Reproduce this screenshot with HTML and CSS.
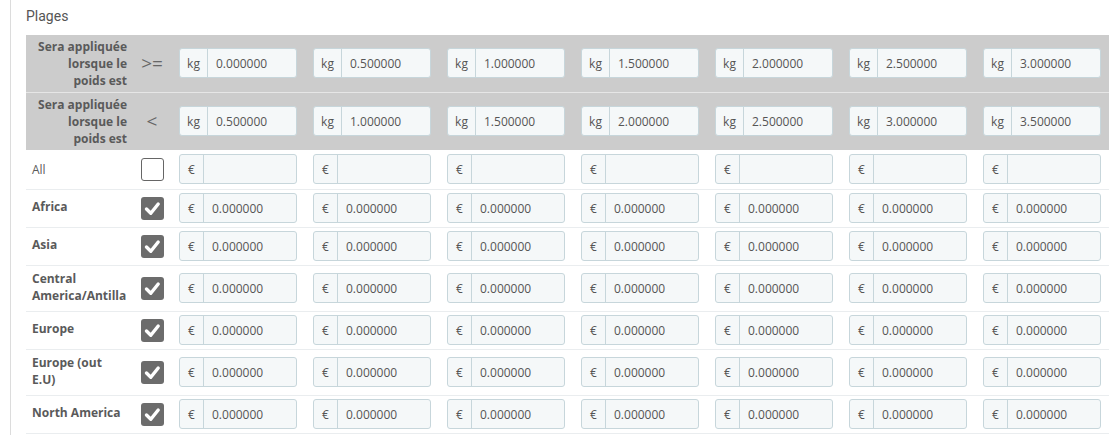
FILE: index.html
```html
<!DOCTYPE html>
<html lang="fr">
  <head>
    <meta charset="UTF-8" />
    <title>Plages</title>
    <link rel="stylesheet" href="styles.css">
  </head>
  <body>
    <div class="panel">
      <h3 class="panel-title">Plages</h3>

      <table class="ranges">
        <colgroup>
          <col class="col-label">
          <col class="col-op">
          <col class="col-val"><col class="col-val"><col class="col-val"><col class="col-val">
          <col class="col-val"><col class="col-val"><col class="col-val">
        </colgroup>
        <tbody id="ranges-body">
          <!-- bornes inférieures -->
          <tr class="range-row">
            <td class="range-label">Sera appliquée<br>lorsque le<br>poids est</td>
            <td class="range-op">&gt;=</td>
            <td><div class="input-group"><span class="addon kg">kg</span><input type="text" value="0.000000"></div></td>
            <td><div class="input-group"><span class="addon kg">kg</span><input type="text" value="0.500000"></div></td>
            <td><div class="input-group"><span class="addon kg">kg</span><input type="text" value="1.000000"></div></td>
            <td><div class="input-group"><span class="addon kg">kg</span><input type="text" value="1.500000"></div></td>
            <td><div class="input-group"><span class="addon kg">kg</span><input type="text" value="2.000000"></div></td>
            <td><div class="input-group"><span class="addon kg">kg</span><input type="text" value="2.500000"></div></td>
            <td><div class="input-group"><span class="addon kg">kg</span><input type="text" value="3.000000"></div></td>
          </tr>

          <!-- bornes supérieures -->
          <tr class="range-row second">
            <td class="range-label">Sera appliquée<br>lorsque le<br>poids est</td>
            <td class="range-op">&lt;</td>
            <td><div class="input-group"><span class="addon kg">kg</span><input type="text" value="0.500000"></div></td>
            <td><div class="input-group"><span class="addon kg">kg</span><input type="text" value="1.000000"></div></td>
            <td><div class="input-group"><span class="addon kg">kg</span><input type="text" value="1.500000"></div></td>
            <td><div class="input-group"><span class="addon kg">kg</span><input type="text" value="2.000000"></div></td>
            <td><div class="input-group"><span class="addon kg">kg</span><input type="text" value="2.500000"></div></td>
            <td><div class="input-group"><span class="addon kg">kg</span><input type="text" value="3.000000"></div></td>
            <td><div class="input-group"><span class="addon kg">kg</span><input type="text" value="3.500000"></div></td>
          </tr>

          <!-- tous les pays -->
          <tr class="zone-row all-row">
            <td class="zone-label all">All</td>
            <td class="zone-check"><span class="check"></span></td>
            <td><div class="input-group"><span class="addon">€</span><input type="text" value=""></div></td>
            <td><div class="input-group"><span class="addon">€</span><input type="text" value=""></div></td>
            <td><div class="input-group"><span class="addon">€</span><input type="text" value=""></div></td>
            <td><div class="input-group"><span class="addon">€</span><input type="text" value=""></div></td>
            <td><div class="input-group"><span class="addon">€</span><input type="text" value=""></div></td>
            <td><div class="input-group"><span class="addon">€</span><input type="text" value=""></div></td>
            <td><div class="input-group"><span class="addon">€</span><input type="text" value=""></div></td>
          </tr>
        </tbody>
      </table>
    </div>

    <script>
      // zones : lignes identiques, on les génère
      var zones = ['Africa', 'Asia', 'Central America/Antilla', 'Europe', 'Europe (out E.U)', 'North America'];
      var html = '';
      zones.forEach(function (z) {
        var tall = z.length > 14 ? ' tall' : '';
        html += '<tr class="zone-row' + tall + '"><td class="zone-label">' + z + '</td>';
        html += '<td class="zone-check"><span class="check checked"><svg viewBox="0 0 23 23" width="23" height="23"><path d="M5.5 12 L9.8 16.2 L17.2 7" fill="none" stroke="#fff" stroke-width="3.4" stroke-linecap="round" stroke-linejoin="round"/></svg></span></td>';
        for (var i = 0; i < 7; i++) {
          html += '<td><div class="input-group"><span class="addon">€</span><input type="text" value="0.000000"></div></td>';
        }
        html += '</tr>';
      });
      document.getElementById('ranges-body').insertAdjacentHTML('beforeend', html);
    </script>
  </body>
</html>
```

FILE: styles.css
```css
body {
  margin: 0;
  padding: 0;
  background-color: white;
  font-family: 'Open Sans', 'Noto Sans', sans-serif;
  font-size: 12px;
  color: #555;
}

.panel {
  margin-left: 10px;
  border-left: 1px solid #dcdcdc;
  padding-left: 15px;
  min-height: 435px;
  box-sizing: border-box;
}

.panel-title {
  margin: 0;
  padding-top: 6px;
  height: 29px;
  font-family: Roboto, 'Open Sans', sans-serif;
  font-weight: normal;
  font-size: 14px;
  line-height: 20px;
  color: #555;
}

/* tableau des plages */
.ranges {
  border-collapse: collapse;
  table-layout: fixed;
  width: 1083px;
}

.col-label { width: 107px; }
.col-op { width: 38px; }
.col-val { width: 134px; }

.ranges td {
  padding: 0 8px;
  vertical-align: middle;
}

.range-row {
  height: 57px;
}

.range-row.second {
  height: 58px;
}

.range-row td {
  background-color: #cccccc;
}

.range-row.second td {
  border-top: 1px solid #e6e6e6;
}

.range-label {
  font-weight: bold;
  text-align: right;
  line-height: 17px;
  color: #5a5a5a;
  padding: 0 6px !important;
}

.range-op {
  text-align: center;
  font-size: 19px;
  color: #666;
  padding: 0 !important;
}

/* lignes des zones */
.zone-row {
  height: 38px;
}

.zone-row.all-row {
  height: 39px;
}

.zone-row.tall {
  height: 46px;
}

.zone-row td {
  border-bottom: 1px solid #eaedef;
}

.zone-label {
  font-weight: bold;
  line-height: 17px;
  color: #5a5a5a;
  padding: 0 6px 3px !important;
}

.zone-label.all {
  font-weight: normal;
  padding-bottom: 0 !important;
}

.zone-check {
  padding: 0 7px 0 8px !important;
}

.check {
  display: block;
  width: 23px;
  height: 23px;
  box-sizing: border-box;
  border: 1px solid #666;
  border-radius: 3px;
  background-color: white;
}

.check.checked {
  border: none;
  background-color: #6c6c6c;
}

.check svg {
  display: block;
}

/* champs avec préfixe */
.input-group {
  display: flex;
  width: 118px;
  height: 30px;
  box-sizing: border-box;
  border: 1px solid #c7d6db;
  border-radius: 3px;
  background-color: #f5f8f9;
  overflow: hidden;
}

.addon {
  display: flex;
  align-items: center;
  justify-content: center;
  width: 23px;
  border-right: 1px solid #c7d6db;
  font-size: 12px;
  color: #555;
}

.addon.kg {
  width: 27px;
}

.input-group input {
  flex: 1;
  min-width: 0;
  border: none;
  background: transparent;
  padding: 0 0 0 8px;
  font-family: 'Open Sans', 'Noto Sans', sans-serif;
  font-size: 12px;
  color: #555;
  outline: none;
}
```
